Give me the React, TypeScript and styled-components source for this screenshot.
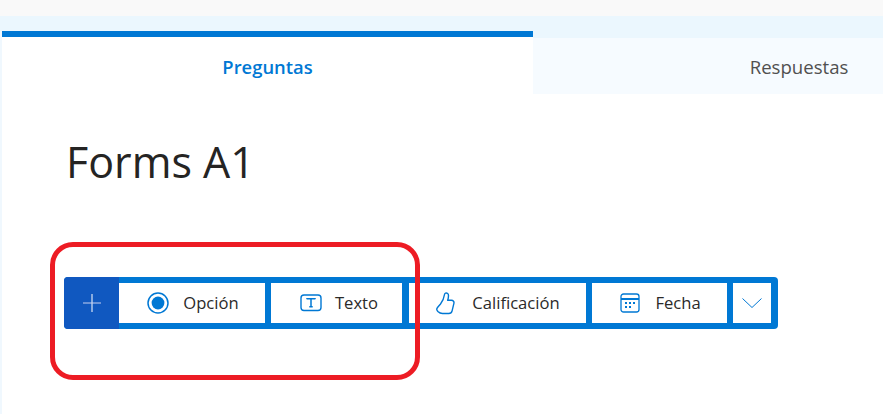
import React from 'react';
import styled, { createGlobalStyle } from 'styled-components';

const Global = createGlobalStyle`
  html, body { margin: 0; padding: 0; background: #fff; }
  body { font-family: "Open Sans", "Noto Sans", sans-serif; width: 883px; height: 414px; overflow: hidden; }
`;
const Page = styled.div`position: relative; width: 883px; height: 414px; background: #fff; overflow: hidden;`;
const TopBand = styled.div`height: 16px; background: #f9f9f9;`;
const TabBar = styled.div`display: grid; grid-template-columns: 531px 532px; padding-left: 2px; height: 78px; background: #ebf7fe;`;
const Tab = styled.div<{ $active?: boolean }>`
  display: flex; align-items: center; justify-content: center;
  margin-top: ${p => (p.$active ? '15px' : '22px')};
  padding-top: ${p => (p.$active ? 3 : 1)}px;
  border-top: ${p => (p.$active ? '6px solid #0078d4' : 'none')};
  background: ${p => (p.$active ? '#fff' : '#f6fbff')};
  color: ${p => (p.$active ? '#0078d4' : '#505050')};
  font-weight: ${p => (p.$active ? 600 : 400)};
  font-size: ${p => (p.$active ? 18.4 : 18.6)}px;
  line-height: 22px;
`;
const Body = styled.div`display: flex; flex-direction: column; padding: 0 0 0 64px;`;
const Title = styled.h1`margin: 41px 0 0 2px; font-size: 43px; font-weight: 400; line-height: 54px; color: #252423;`;
const Toolbar = styled.div`display: flex; align-items: stretch; width: 714px; height: 52px; margin-top: 88px; background: #0078d4; border-radius: 4px; box-sizing: border-box; padding: 6px 7px 6px 0;`;
const PlusBox = styled.div`display: flex; align-items: center; justify-content: center; width: 55px; margin: -6px 0; background: #1058c0; border-radius: 4px 0 0 4px;`;
const Item = styled.div<{ $w: number; $gap?: number; $shift?: number; $iconGap?: number }>`
  display: flex; align-items: center; gap: ${p => p.$iconGap ?? 14}px; justify-content: center;
  box-sizing: border-box;
  width: ${p => p.$w}px; margin-left: ${p => p.$gap ?? 6}px;
  padding-left: ${p => p.$shift ?? 0}px;
  background: #fff; color: #2b2a29; font-size: 16.6px; line-height: 22px;
`;
const Annotation = styled.div`position: absolute; left: 50px; top: 242px; width: 370px; height: 138px; box-sizing: border-box; border: 5px solid #ed1c24; border-radius: 23px; pointer-events: none;`;
const Strip = styled.div`position: absolute; left: 0; top: 31px; bottom: 0; width: 2px; background: #f0f8fe;`;

export default function App() {
  return (
    <Page>
      <Global />
      <TopBand />
      <TabBar>
        <Tab $active>Preguntas</Tab>
        <Tab>Respuestas</Tab>
      </TabBar>
      <Strip />
      <Body>
        <Title>Forms A1</Title>
        <Toolbar>
          <PlusBox>
            <svg width="20" height="20" viewBox="0 0 20 20" fill="none" strokeWidth="1"><path d="M10 1v18" stroke="#fff" /><path d="M1 10h18" stroke="#c5cff0" /></svg>
          </PlusBox>
          <Item $w={146} $gap={0} $shift={2}>
            <svg width="22" height="22" viewBox="0 0 22 22"><circle cx="11" cy="11" r="10" fill="none" stroke="#0078d4" strokeWidth="1.5" /><circle cx="11" cy="11" r="6.4" fill="#0078d4" /></svg>
            Opción
          </Item>
          <Item $w={131} $shift={5} $iconGap={13}>
            <svg width="22" height="18" viewBox="0 0 22 18" fill="none" stroke="#0078d4"><rect x="1" y="1" width="20" height="15.5" rx="3" strokeWidth="1.4" /><path d="M7 5.2V4.8h8v.4M11 4.8v8M9.3 12.8h3.4" strokeWidth="1.5" /></svg>
            Texto
          </Item>
          <Item $w={177} $gap={7} $shift={1} $iconGap={16}>
            <svg width="20" height="23" viewBox="0 0 20 23" fill="none" stroke="#0078d4" strokeWidth="1.4" strokeLinejoin="round"><path d="M9.500 1.200c1.600-.5 3 .5 3 2.300 0 1.800-.3 3.300-.8 4.800h3.800c1.700 0 2.800 1.400 2.400 3l-1.800 7.500c-.4 1.700-1.600 2.700-3.300 2.700H6.500c-1.700 0-3-.4-4.300-1.700L1.500 19c-.9-1-.9-2.400 0-3.500l3-3.500C6.500 9.500 8 6 8.500 2.500c.1-.6.400-1.100 1-1.300Z" /></svg>
            Calificación
          </Item>
          <Item $w={135} $shift={2} $iconGap={15}>
            <svg width="20" height="20" viewBox="0 0 20 20" fill="none" stroke="#0078d4"><rect x="1" y="1" width="18" height="18" rx="2.500" strokeWidth="1.300" /><path d="M1 6h18" strokeWidth="2" /><g fill="#0078d4" stroke="none"><rect x="5" y="9" width="2" height="2" /><rect x="9" y="9" width="2" height="2" /><rect x="13" y="9" width="2" height="2" /><rect x="5" y="13" width="2" height="2" /><rect x="9" y="13" width="2" height="2" /></g></svg>
            Fecha
          </Item>
          <Item $w={38}>
            <svg width="20" height="10" viewBox="0 0 20 10" fill="none" stroke="#0078d4" strokeWidth="1"><path d="M.5.500 10 9.500 19.500.500" /></svg>
          </Item>
        </Toolbar>
      </Body>
      <Annotation />
    </Page>
  );
}
